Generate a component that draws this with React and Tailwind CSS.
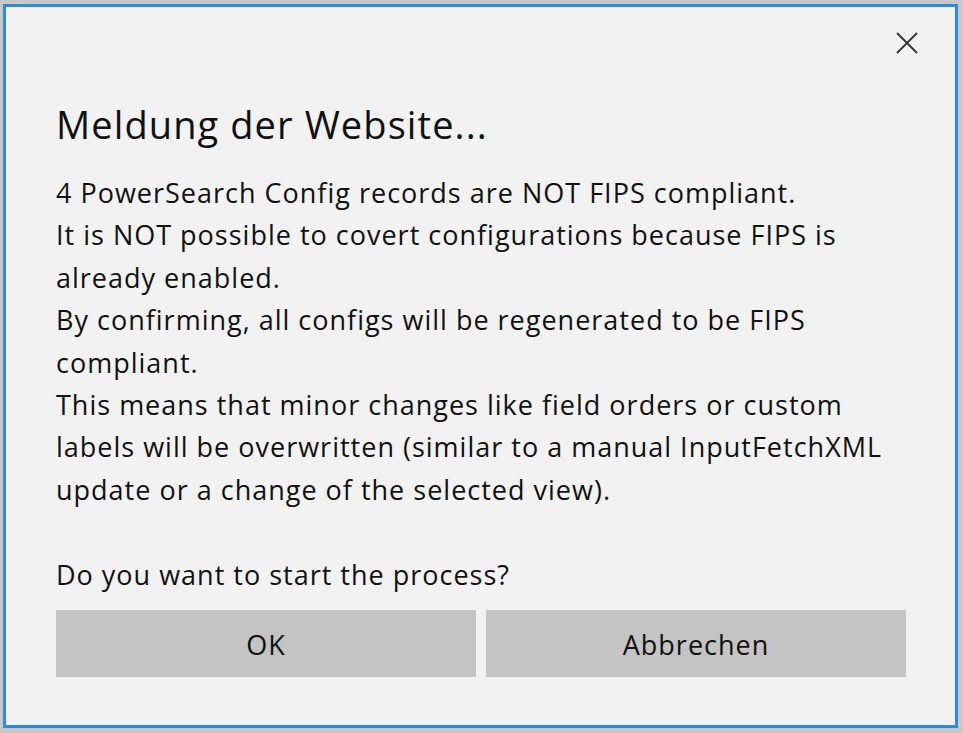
import React from 'react';

export default function App() {
  return (
    <div className="w-[963px] h-[733px] bg-[#c8c8c8] pt-[4px] pl-[3px] pr-[5px] pb-[5px]" style={{ fontFamily: '"Open Sans", "Noto Sans", sans-serif' }}>
      <div className="relative h-full border-[3px] border-[#2a8be0] bg-[#f2f2f2] text-[#111]">
        {/* schliessen */}
        <button className="absolute right-[35px] top-[23px] w-[26px] h-[26px] flex items-center justify-center text-[#333]">
          <svg width="24" height="24" viewBox="0 0 24 24" fill="none" stroke="currentColor" strokeWidth="1.8">
            <path d="M2 2 L22 22 M22 2 L2 22" />
          </svg>
        </button>

        <div className="pl-[50px] pr-[49px]">
          <h1 className="pt-[93px] text-[38px] leading-[48px] font-normal tracking-[1.1px]">Meldung der Website...</h1>

          <div className="mt-[24px] text-[27px] leading-[42.4px] tracking-[1px]">
            <p>4 PowerSearch Config records are NOT FIPS compliant.</p>
            <p>It is NOT possible to covert configurations because FIPS is<br />already enabled.</p>
            <p>By confirming, all configs will be regenerated to be FIPS<br />compliant.</p>
            <p>This means that minor changes like field orders or custom<br />labels will be overwritten (similar to a manual InputFetchXML<br />update or a change of the selected view).</p>
            <p className="mt-[42.4px]">Do you want to start the process?</p>
          </div>

          <div className="mt-[14px] grid grid-cols-2 gap-[10px]">
            <button className="h-[67px] pt-[3px] bg-[#c4c4c4] text-[27px] tracking-[1px] text-[#111]">OK</button>
            <button className="h-[67px] pt-[3px] bg-[#c4c4c4] text-[27px] tracking-[1px] text-[#111]">Abbrechen</button>
          </div>
        </div>
      </div>
    </div>
  );
}
